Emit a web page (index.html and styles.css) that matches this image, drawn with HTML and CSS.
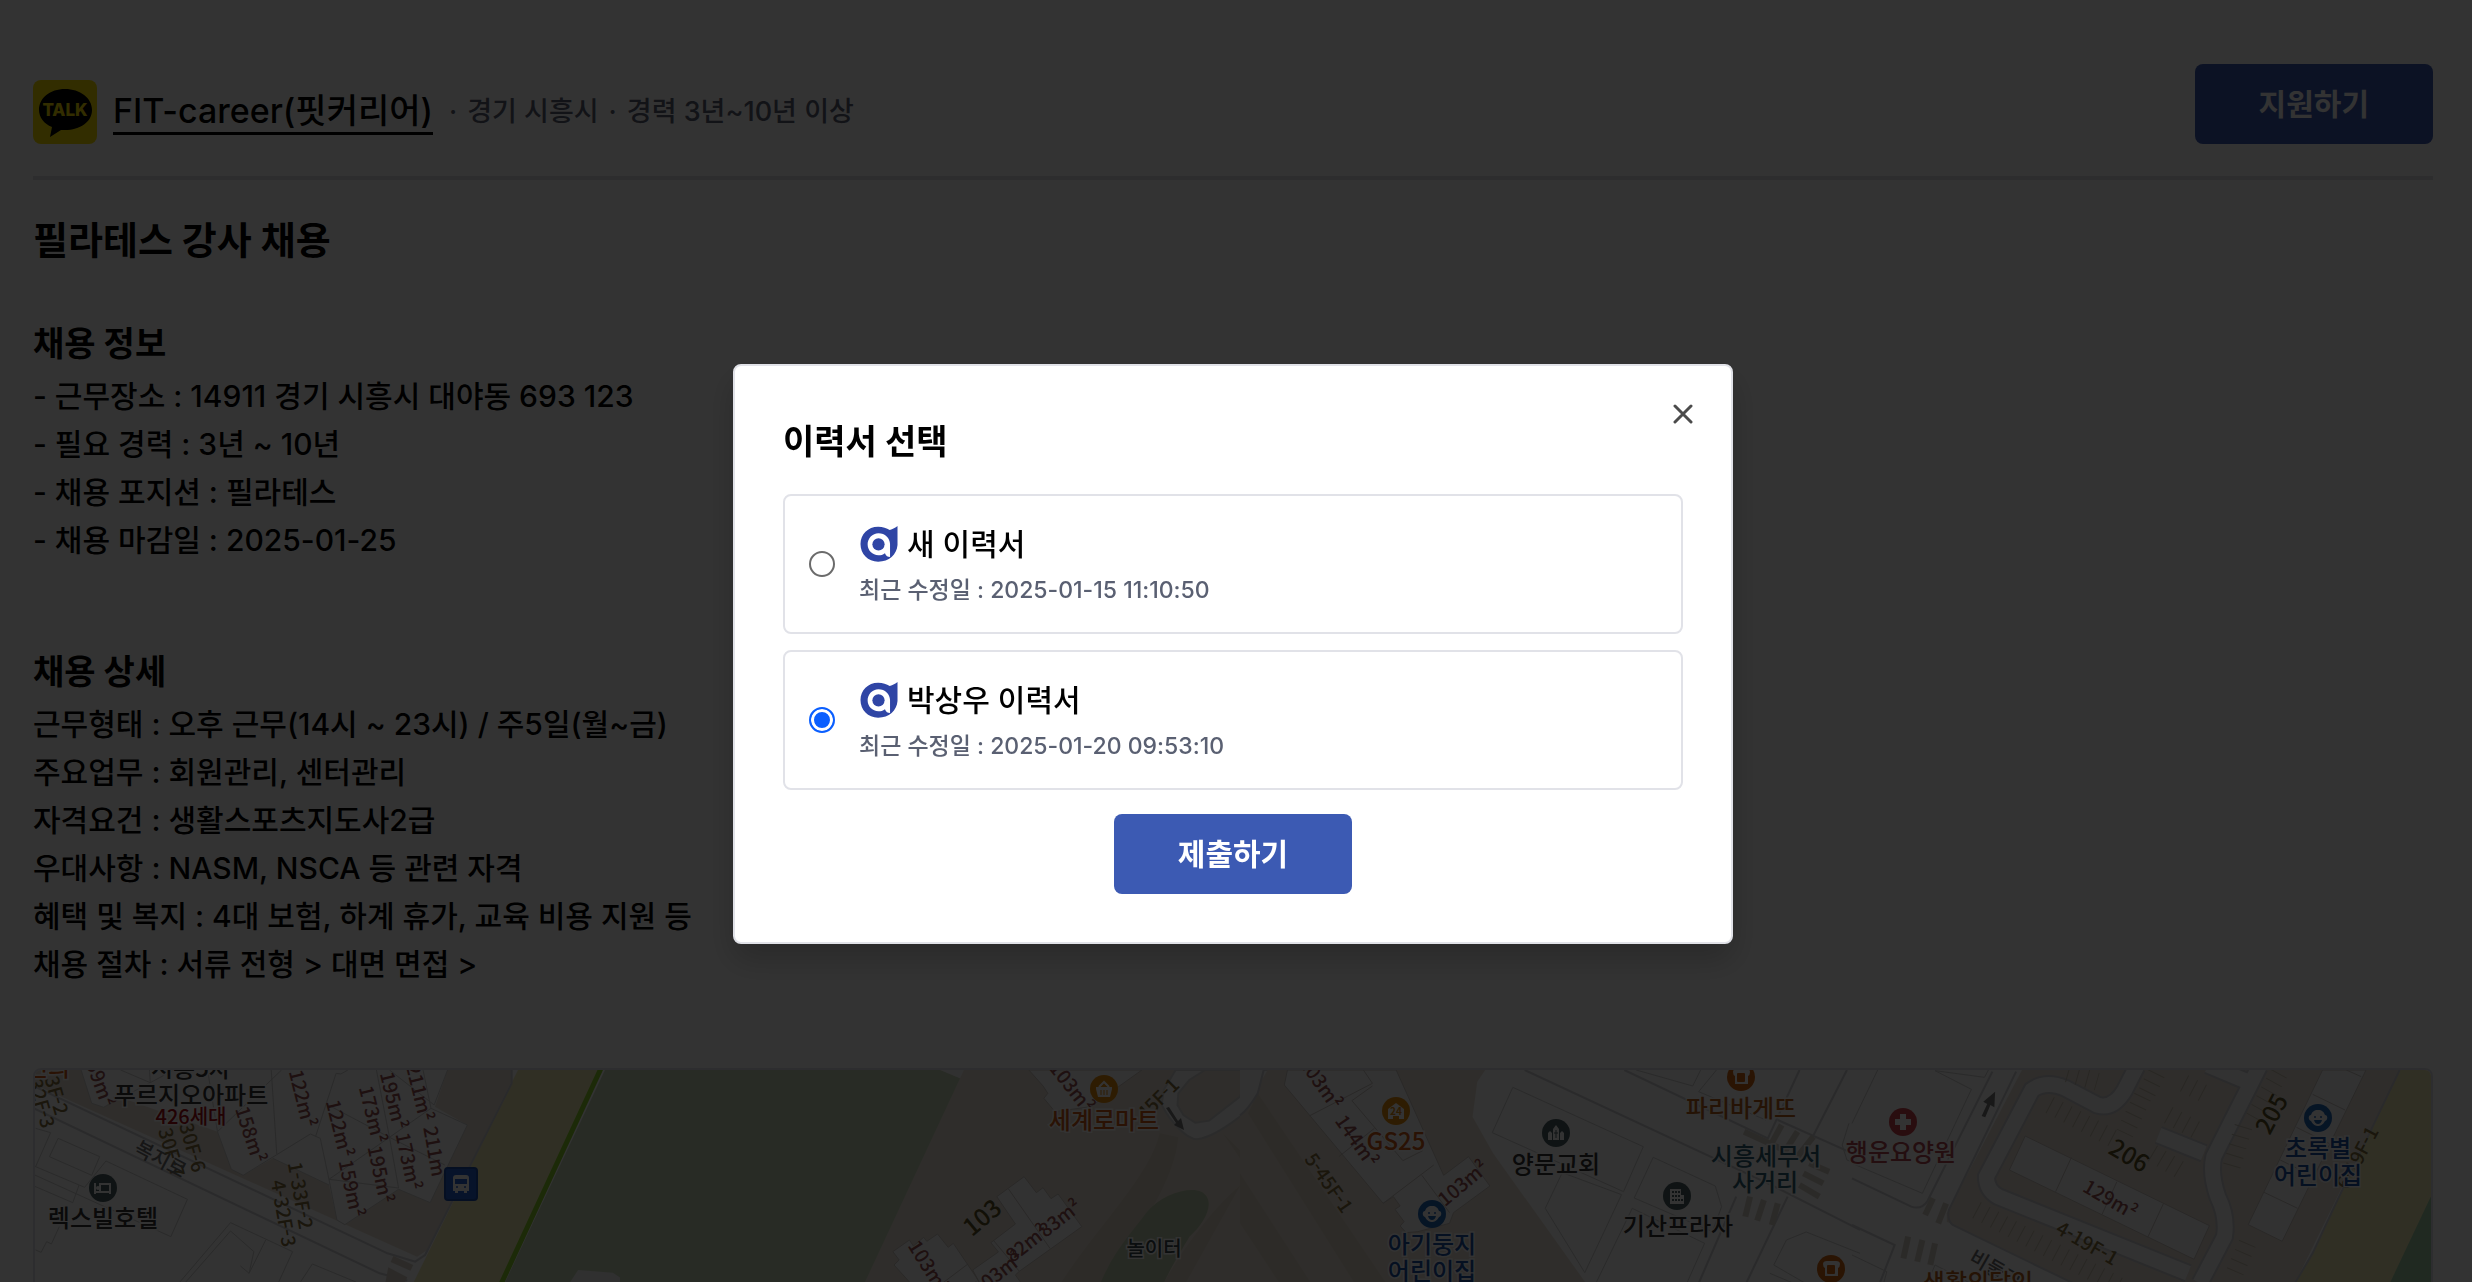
FILE: index.html
```html
<!DOCTYPE html>
<html lang="ko">
<head>
<meta charset="utf-8">
<meta name="viewport" content="width=device-width, initial-scale=1">
<title>필라테스 강사 채용</title>
<link rel="stylesheet" href="styles.css">
</head>
<body>
<svg class="sprite" aria-hidden="true">
  <symbol id="logo" viewBox="0 0 109 106">
    <path fill="#2f45a5" d="M52 2C66 2 77 6 86 12C95 9 103 5 109 0V56C107 84 84 105 52 105C22 105 0 82 0 53S22 2 52 2Z"/>
    <path fill="#fff" d="M53 21C72 21 87 35 87 54V91C80 91 75 88 72 80C66 85 60 86 53 86C35 86 21 72 21 54S35 21 53 21Z"/>
    <circle cx="53" cy="54" r="18" fill="#2f45a5"/>
  </symbol>
  <symbol id="bread" viewBox="-15 -15 30 30">
    <circle r="14" fill="#d0640f"/>
    <path fill="#fff" d="M-8-5Q-8-8-4-8H5Q9-8 9-5T7-1V7H-6V-1Q-8-2-8-5Z"/>
    <rect x="-4" y="-4" width="8" height="9" rx="1" fill="#d0640f"/>
  </symbol>
  <symbol id="baby" viewBox="-15 -15 30 30">
    <circle r="14" fill="#2268b8"/>
    <path fill="#fff" d="M0-8C4-8 6-6 7-3C10-3 10 2 7 3C5 7 2 8 0 8S-5 7-7 3C-10 2-10-3-7-3C-6-6-4-8 0-8Z"/>
    <circle cx="-3" cy="-1" r="1" fill="#2268b8"/><circle cx="3" cy="-1" r="1" fill="#2268b8"/>
    <path fill="#2268b8" d="M-4 2H4Q3 6 0 6T-4 2Z"/>
  </symbol>
</svg>

<main class="page">
  <header class="header">
    <div class="company">
      <svg class="talk" viewBox="0 0 64 64" role="img" aria-label="카카오톡">
        <rect width="64" height="64" rx="8" fill="#fae100"/>
        <path fill="#000" d="M32 9C47 9 59 18 59 30S47 50 32 50L28 50L17 57L19 47C11 44 6 37 6 30C6 18 17 9 32 9Z"/>
        <text x="32" y="36" text-anchor="middle" class="talk-text">TALK</text>
      </svg>
      <a class="name" href="#">FIT-career(핏커리어)</a>
      <ul class="meta">
        <li>경기 시흥시</li>
        <li>경력 3년~10년 이상</li>
      </ul>
    </div>
    <button class="btn" type="button">지원하기</button>
  </header>

  <h1 class="title">필라테스 강사 채용</h1>

  <section class="section">
    <h2>채용 정보</h2>
    <p>- 근무장소 : 14911 경기 시흥시 대야동 693 123</p>
    <p>- 필요 경력 : 3년 ~ 10년</p>
    <p>- 채용 포지션 : 필라테스</p>
    <p>- 채용 마감일 : 2025-01-25</p>
  </section>

  <section class="section">
    <h2>채용 상세</h2>
    <p>근무형태 : 오후 근무(14시 ~ 23시) / 주5일(월~금)</p>
    <p>주요업무 : 회원관리, 센터관리</p>
    <p>자격요건 : 생활스포츠지도사2급</p>
    <p>우대사항 : NASM, NSCA 등 관련 자격</p>
    <p>혜택 및 복지 : 4대 보험, 하계 휴가, 교육 비용 지원 등</p>
    <p>채용 절차 : 서류 전형 &gt; 대면 면접 &gt;</p>
  </section>

  <div class="map">
    <svg class="map-svg" viewBox="0 0 2396 212">
      <rect width="2396" height="212" fill="#fcfcfc"/>
      <g transform="translate(-35 -20) scale(.3954 .3333)">
        <path class="land" d="M80 60H205L232 160 262 172 300 140 550 245 585 358 615 376 690 325 832 405 852 510 872 524 1008 418 1088 458 1182 225 1100 170 1132 60H1292L1296 90 1080 600 1055 620 80 100Z"/>
        <path class="sand" d="M1310 60H1520L1268 700H1045Z"/>
        <path class="park" d="M1530 60H1900V700H1276Z"/>
        <path class="green-line" d="M1520 55L1268 700"/>
        <path fill="#eee" d="M1462 660L1550 668 1590 700H1440Z"/>
        <path class="road" d="M80 105L980 610 1050 635 1075 615 1294 100V55M80 172L960 670 1030 692"/>
        <path class="line" d="M205 60L232 160 262 172 380 98 305 60M378 60L380 98 440 60M525 60L550 245 585 358 615 376 785 252 810 265 832 388 852 510 872 524 1008 418 1088 458 1182 225 1090 175 985 262 832 388 1008 414 985 262 952 60M686 60L700 312M550 245L712 60M798 260L850 70 862 72 880 60M825 162L985 262 1125 345M1132 60L1098 165 985 60M690 325L832 405M1070 60L1090 175M90 235L128 248 90 350M147 265L252 320 232 376 125 320ZM80 345L200 405 184 458 80 405M200 405L214 412 268 333 474 448 432 560 60 360M455 696L583 518 740 605 705 696M470 696L583 543 642 605 630 670 608 648M630 670L672 570M760 696L790 642 900 696M90 600L104 607 118 575 130 582 150 530"/>
        <path fill="#d9d2c8" d="M995 618L1045 645 1038 662 988 636ZM982 652L1030 682 1025 696H975Z"/>
      </g>
      <g transform="translate(585 -20) scale(.3954 .3333)">
        <path class="land" d="M810 60H1650V700H610Z"/>
        <path class="park" d="M0 60H810L860 85 618 700H0Z"/>
        <path fill="#f4f4f4" d="M810 60H870L860 85Z"/>
        <path fill="#dfd5c8" d="M1365 250L1412 262C1400 400 1320 520 1230 700H1115C1200 540 1340 380 1365 250ZM1525 250L1600 340 1430 700H1375C1440 560 1540 420 1600 380Z"/>
        <path fill="#bfcdae" d="M1215 700C1250 600 1300 540 1330 490C1370 430 1440 410 1470 425C1510 450 1480 520 1440 560C1420 600 1390 660 1375 700Z"/>
        <path fill="#f8f8f8" stroke="#d6d6d6" stroke-width="2" d="M1405 60L1375 120 1370 165C1390 210 1430 268 1460 268Q1500 262 1568 200L1640 130V60ZM1480 60L1440 90 1412 130 1410 165 1425 195 1455 218 1490 212 1568 140 1590 60Z" fill-rule="evenodd"/>
        <path class="plot" d="M1034 60L1070 108 1082 130 1072 145 1100 185 1190 170 1320 60ZM953 440L1022 380 1053 428 1070 413 1090 446 1108 432 1168 530 1010 664 1000 675 1015 700H910L892 660 957 606 938 578 1000 522ZM690 605L732 570 742 588 768 562 776 574 803 552 830 592 843 580 900 680 910 700H735L693 645 706 630ZM982 416L1088 596M945 572L1010 664M815 700L880 642"/>
      </g>
      <g transform="translate(1205 -20) scale(.3954 .3333)">
        <path class="land" d="M0 200L70 60H620L600 95 588 200 640 310 875 700H0Z"/>
        <path fill="#f8f8f8" d="M0 60H60L45 130Q20 180 0 196Z"/>
        <path fill="#e1d7c9" d="M45 130L370 700H290L20 190ZM0 370L180 700H100L0 520Z"/>
        <path class="road" d="M60 60L45 130Q20 180 0 196"/>
        <path class="plot" d="M120 60L112 105 362 460 388 440 405 468 392 478 415 515 405 528 420 548 450 545 530 520 540 488 632 408 578 320 515 376 395 60ZM175 198L335 100 312 60M283 152L335 108M283 152L412 332 462 302M250 320L340 235M362 460L490 345M460 376L530 488"/>
        <path class="road" d="M720 60L1335 400 1568 540M972 60L1335 265 1415 60M1360 210L1568 320M1535 60L1440 280M1255 440L1160 700M1385 440L1280 700"/>
        <path class="line" d="M690 112L1020 290 970 425 638 248ZM815 368L965 434 872 668 772 475ZM1045 322L1202 408 1218 470 1195 545 997 444ZM992 475L1175 580 1130 700M992 475L900 700M1002 60L1145 108 1165 60M1205 60L1160 125 1330 210M1350 645L1382 570 1432 546 1568 610M1350 645L1430 700M1340 670L1400 700M1540 220L1523 285 1535 330 1568 345"/>
        <path class="cross" d="M1275 245L1375 300M1370 225L1340 290M1410 245L1375 310M1450 260L1410 320M1440 340L1490 365M1425 370L1475 400M1415 405L1465 440M1290 440L1278 500M1325 450L1308 512M1360 460L1345 525"/>
      </g>
      <g transform="translate(1817 -20) scale(.3954 .3333)">
        <path class="land" d="M430 60H1385L1120 700H560L240 515V490Z"/>
        <path class="sand" d="M1385 60H1480V430L1360 700H1120Q1190 560 1220 470Z"/>
        <path fill="#a0cda5" d="M1480 400L1360 700H1480Z"/>
        <path class="lane-edge" d="M720 50L690 120Q660 180 620 165L540 115Q490 90 455 120L340 380Q340 420 370 440L850 670M1030 50L915 320Q905 370 925 440Q950 500 942 560L880 700M890 310L775 255M1000 95L900 45"/>
        <path class="lane" d="M720 50L690 120Q660 180 620 165L540 115Q490 90 455 120L340 380Q340 420 370 440L850 670M1030 50L915 320Q905 370 925 440Q950 500 942 560L880 700M890 310L775 255M1000 95L900 45"/>
        <path class="bays" d="M500 165L660 265M315 480L740 750M735 140L690 250M770 70L745 130M840 100L905 140M800 195L870 240M760 310L845 370M990 230L960 350M1080 70L1010 220M545 70L620 95M1000 580L960 690"/>
        <path class="plot" d="M438 258L904 527 865 628 398 360ZM555 322L515 425M670 395L632 494M788 460L748 562M1190 60L1300 60 1088 574 1002 524ZM1165 133L1247 180M1124 232L1206 280M1083 330L1165 378M1042 427L1127 475M1250 60L1288 80"/>
        <path class="road" d="M415 65L245 480Q240 510 255 525L560 700M355 65L190 455Q175 480 150 470L0 385M0 525L108 585 70 700M1385 60L1220 470 1165 610 1120 700"/>
        <path class="line" d="M0 220L65 60M210 62L302 118 178 430 0 340M210 62L335 82 345 60M0 615L88 665 80 700M190 700L210 645 300 700"/>
        <path class="cross" d="M205 445L185 495M238 460L218 520M142 560L130 625M178 570L165 635M210 580L198 645"/>
        <path fill="#777" d="M362 125L332 155 342 162 328 198 337 202 350 165 360 172Z"/>
      </g>
      <path fill="#777" d="M1131 38L1134 37 1143 51 1146 48 1149 60 1139 55 1141 53Z"/>

      <g class="area">
        <text transform="translate(269 28) rotate(76)">122m²</text>
        <text transform="translate(306 58) rotate(76)">122m²</text>
        <text transform="translate(217 64) rotate(72)">158m²</text>
        <text transform="translate(65 8) rotate(70)">159m²</text>
        <text transform="translate(360 30) rotate(76)">195m²</text>
        <text transform="translate(339 44) rotate(76)">173m²</text>
        <text transform="translate(386 22) rotate(76)">211m²</text>
        <text transform="translate(401 81) rotate(80)">211m</text>
        <text transform="translate(375 91) rotate(78)">173m²</text>
        <text transform="translate(347 104) rotate(78)">195m²</text>
        <text transform="translate(318 118) rotate(78)">159m²</text>
        <text transform="translate(1038 16) rotate(52)">103m²</text>
        <text transform="translate(1024 147) rotate(-38)">83m²</text>
        <text transform="translate(991 172) rotate(-38)">82m²</text>
        <text transform="translate(962 202) rotate(-38)">103m²</text>
        <text transform="translate(895 196) rotate(58)">103m²</text>
        <text transform="translate(1287 12) rotate(55)">103m²</text>
        <text transform="translate(1323 70) rotate(55)">144m²</text>
        <text transform="translate(1427 112) rotate(-40)">103m²</text>
        <text transform="translate(2076 128) rotate(30)">129m²</text>
      </g>
      <g class="floor">
        <text transform="translate(159 77) rotate(74)">30F-6</text>
        <text transform="translate(138 82) rotate(74)">30F-7</text>
        <text transform="translate(267 125) rotate(80)">1-33F-2</text>
        <text transform="translate(250 143) rotate(80)">4-32F-3</text>
        <text transform="translate(23 25) rotate(74)">3F-2</text>
        <text transform="translate(8 33) rotate(74)">32F-3</text>
        <text transform="translate(1122 28) rotate(-45)">45F-1</text>
        <text transform="translate(1295 112) rotate(55)">5-45F-1</text>
        <text transform="translate(2053 172) rotate(30)">4-19F-1</text>
        <text transform="translate(2321 87) rotate(-62)">6-19F-1</text>
      </g>
      <g class="block">
        <text transform="translate(946 146) rotate(-40)">103</text>
        <text transform="translate(2095 84) rotate(30)">206</text>
        <text transform="translate(2235 43) rotate(-62)">205</text>
      </g>
      <g class="street">
        <text transform="translate(126 88) rotate(28)">복지로</text>
        <text transform="translate(1961 198) rotate(30)">비둘기</text>
      </g>
      <g class="place">
        <text x="156" y="7">시흥5차</text>
        <text x="156" y="34">푸르지오아파트</text>
        <text x="68" y="157">렉스빌호텔</text>
        <text x="1521" y="103">양문교회</text>
        <text x="1643" y="165">기산프라자</text>
        <text class="small red" x="156" y="54">426세대</text>
        <text class="small slate" x="1119" y="186">놀이터</text>
        <text class="orange" x="13" y="6">편의</text>
        <text class="orange" x="1069" y="59">세계로마트</text>
        <text class="orange" x="1361" y="80">GS25</text>
        <text class="brown" x="1706" y="47">파리바게뜨</text>
        <text class="brown" x="1943" y="221">생활의달인</text>
        <text class="teal" x="1731" y="95">시흥세무서</text>
        <text class="teal" x="1730" y="121">사거리</text>
        <text class="rose" x="1866" y="91">행운요양원</text>
        <text class="blue" x="1397" y="183">아기둥지</text>
        <text class="blue" x="1397" y="210">어린이집</text>
        <text class="blue" x="2283" y="87">초록별</text>
        <text class="blue" x="2283" y="114">어린이집</text>
      </g>

      <g transform="translate(68 118)">
        <circle r="14" fill="#4b5f64"/>
        <path fill="none" stroke="#fff" stroke-width="2" d="M-8-5V6M-8 4H8M-3 4V-4H7V6"/><circle cx="-5" cy="0" r="2" fill="#fff"/>
      </g>
      <g transform="translate(409 97)">
        <rect x="1" y="1" width="32" height="32" rx="3" fill="#2560d0" stroke="#1b4cab" stroke-width="2"/>
        <path fill="#fff" d="M9 11Q9 8 12 8H22Q25 8 25 11V24H23V26H20V24H14V26H11V24H9Z"/>
        <rect x="11" y="12" width="12" height="5" fill="#2560d0"/>
        <circle cx="13" cy="20" r="1" fill="#2560d0"/><circle cx="21" cy="20" r="1" fill="#2560d0"/>
      </g>
      <g transform="translate(1069 19)">
        <circle r="14" fill="#e58d0c"/>
        <path fill="#fff" d="M-8-2H8V0L6 8H-6L-8 0Z"/>
        <path fill="none" stroke="#fff" stroke-width="2" d="M-5-2L0-7 5-2"/>
        <path stroke="#e58d0c" stroke-width="1" d="M-3 1V6M0 1V6M3 1V6"/>
      </g>
      <g transform="translate(1361 41)">
        <circle r="14" fill="#e58d0c"/>
        <path fill="#fff" d="M0-8L8-2V8H3V5H-3V8H-8V-2Z"/>
        <text class="badge" y="4">24</text>
      </g>
      <g transform="translate(1521 63)">
        <circle r="14" fill="#4b5f64"/>
        <path fill="#fff" d="M-3 7V-4L0-8 3-4V7ZM-8 7V0L-6-2-4 0V7ZM4 7V0L6-2 8 0V7Z"/>
        <path stroke="#4b5f64" stroke-width="1" d="M0-3V5M-2 0H2"/>
      </g>
      <g transform="translate(1642 126)">
        <circle r="14" fill="#4b5f64"/>
        <path fill="#fff" d="M-7-7H4V-1H7V8H-7Z"/>
        <path stroke="#4b5f64" stroke-width="2" stroke-dasharray="2 1" d="M-5-4H3M-5 0H3M-5 4H6"/>
      </g>
      <g transform="translate(1868 52)">
        <circle r="14" fill="#cc424d"/>
        <path fill="#fff" d="M-3-8H3V-3H8V3H3V8H-3V3H-8V-3H-3Z"/>
      </g>
      <use href="#bread" x="1691" y="-8" width="30" height="30"/>
      <use href="#bread" x="1781" y="184" width="30" height="30"/>
      <use href="#baby" x="1382" y="129" width="30" height="30"/>
      <use href="#baby" x="2268" y="33" width="30" height="30"/>
    </svg>
  </div>
</main>

<div class="overlay">
  <form class="modal" role="dialog" aria-modal="true" aria-labelledby="modal-title">
    <button class="close" type="button" aria-label="닫기">
      <svg width="20" height="20" viewBox="0 0 20 20"><path d="M2 2L18 18M18 2L2 18" fill="none" stroke="#4b4b4b" stroke-width="3" stroke-linecap="round"/></svg>
    </button>
    <h2 class="modal-title" id="modal-title">이력서 선택</h2>
    <div class="options">
      <label class="option">
        <input type="radio" name="resume">
        <span class="option-body">
          <span class="option-name"><svg class="logo" aria-hidden="true"><use href="#logo"/></svg>새 이력서</span>
          <span class="option-date">최근 수정일 : 2025-01-15 11:10:50</span>
        </span>
      </label>
      <label class="option">
        <input type="radio" name="resume" checked>
        <span class="option-body">
          <span class="option-name"><svg class="logo" aria-hidden="true"><use href="#logo"/></svg>박상우 이력서</span>
          <span class="option-date">최근 수정일 : 2025-01-20 09:53:10</span>
        </span>
      </label>
    </div>
    <button class="btn" type="submit">제출하기</button>
  </form>
</div>
</body>
</html>
```
FILE: styles.css
```css
* { box-sizing: border-box; margin: 0; padding: 0; }

body {
  height: 100vh;
  overflow: hidden;
  background: #fff;
  color: #000;
  font-family: Inter, "Noto Sans CJK KR", sans-serif;
  font-size: 30px;
  font-weight: 500;
}

.sprite { display: none; }

.page { padding: 64px 39px 64px 33px; }

.header {
  display: flex;
  align-items: flex-end;
  justify-content: space-between;
  padding-bottom: 32px;
  border-bottom: 4px solid #e1e2e4;
}

.company { display: flex; align-items: center; gap: 16px; }
.talk { width: 64px; height: 64px; }
.talk-text { font-size: 17px; font-weight: 800; fill: #fae100; }

.name {
  color: #000;
  font-size: 34px;
  line-height: 42px;
  text-decoration: none;
  border-bottom: 3px solid #000;
}

.meta { display: flex; list-style: none; color: #5a6072; font-size: 27px; line-height: 40px; }
.meta li::before { content: "·"; margin-right: 10px; }
.meta li + li::before { margin-left: 10px; }

.btn {
  height: 80px;
  padding: 0 64px 4px;
  border: 0;
  border-radius: 8px;
  background: #3c5ab3;
  color: #fff;
  font: inherit;
  font-weight: 600;
}

.title { margin-top: 30px; font-size: 38px; line-height: 60px; font-weight: 700; }

.section { margin-top: 80px; }
.title + .section { margin-top: 46px; }
.section h2 { font-size: 34px; line-height: 56px; font-weight: 700; }
.section p { line-height: 48px; }

.map {
  height: 800px;
  margin-top: 80px;
  border: 2px solid #e1e2e8;
  border-radius: 8px;
  overflow: hidden;
}
.map-svg { display: block; width: 100%; }
.map-svg path { vector-effect: non-scaling-stroke; }
.map-svg text { font-family: "Noto Sans CJK KR", sans-serif; text-anchor: middle; }
.land { fill: #ebe1d4; }
.sand { fill: #f0ebb4; }
.park { fill: #c6d7ba; }
.plot { fill: #f8f8f8; stroke: #cdc6c2; stroke-width: 1; }
.line { fill: none; stroke: #d0d0d0; stroke-width: 1; }
.road { fill: none; stroke: #d0d0d4; stroke-width: 2; }
.lane-edge { fill: none; stroke: #d0d0d4; stroke-width: 19; }
.lane { fill: none; stroke: #f8f8f8; stroke-width: 15; }
.bays { fill: none; stroke: #c8c0b2; stroke-width: 18; stroke-dasharray: 1 9; }
.cross { fill: none; stroke: #d7d0c6; stroke-width: 6; }
.green-line { fill: none; stroke: #8cd228; stroke-width: 5; }

.area text, .floor text { font-size: 19px; font-weight: 500; dominant-baseline: central; }
.area { fill: #965050; }
.floor { fill: #826e3c; }
.block text { font-size: 24px; dominant-baseline: central; }
.block { fill: #5a5023; }
.street text { font-size: 20px; dominant-baseline: central; }
.street { fill: #6e6e6e; }
.place text { font-size: 24px; paint-order: stroke; stroke: #fff; stroke-width: 3px; fill: #323232; }
.place .small { font-size: 20px; }
.place .red { fill: #aa0a14; }
.place .slate { fill: #37464b; }
.place .teal { fill: #2d5f73; }
.place .orange { fill: #d25a14; }
.place .brown { fill: #b95f19; }
.place .rose { fill: #b44650; }
.place .blue { fill: #194fa5; }
.map-svg .badge { font-size: 10px; font-weight: 700; fill: #e58d0c; }

.overlay {
  position: fixed;
  inset: 0;
  display: flex;
  align-items: center;
  justify-content: center;
  padding: 26px 6px 0 0;
  background: rgba(0, 0, 0, 0.8);
}

.modal {
  position: relative;
  display: flex;
  flex-direction: column;
  width: 1000px;
  max-width: 100%;
  padding: 48px;
  border: 2px solid #e1e2e8;
  border-radius: 8px;
  background: #fff;
  box-shadow: 0 16px 32px rgba(0, 0, 0, 0.2);
}
.modal .btn { align-self: center; margin-top: 24px; }

.close {
  position: absolute;
  top: 28px;
  right: 28px;
  display: grid;
  place-items: center;
  width: 40px;
  height: 40px;
  border: 0;
  background: none;
}

.modal-title { margin-bottom: 24px; font-size: 34px; line-height: 56px; font-weight: 700; }

.options { display: grid; gap: 16px; }

.option {
  display: flex;
  align-items: center;
  gap: 24px;
  padding: 24px;
  border: 2px solid #e1e2e8;
  border-radius: 8px;
}
.option input {
  appearance: none;
  width: 26px;
  height: 26px;
  border: 2px solid #6b6b6b;
  border-radius: 50%;
}
.option input:checked {
  border-color: #0b5fff;
  background: #0b5fff;
  box-shadow: inset 0 0 0 3px #fff;
}
.option-body { display: grid; gap: 4px; }
.option-name { display: flex; align-items: center; gap: 8px; line-height: 48px; }
.option-date { color: #5a6072; font-size: 23px; line-height: 36px; }
.logo { width: 40px; height: 36px; }
```
